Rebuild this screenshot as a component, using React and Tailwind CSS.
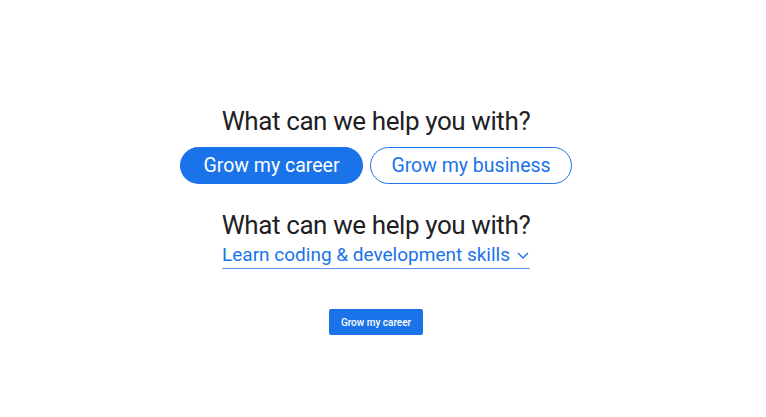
export default function App() {
  return (
    <div className="w-[766px] h-[417px] bg-white flex flex-col items-center pr-[14px]" style={{ fontFamily: "Roboto, 'Noto Sans', sans-serif" }}>
      <h1 className="mt-[104px] text-[26px] leading-[34px] tracking-[-0.4px] text-[#202124]">What can we help you with?</h1>
      <div className="mt-[9px] flex gap-[7px]">
        <button className="w-[183px] h-[37px] rounded-full bg-[#1a73e8] text-white text-[19.5px]">Grow my career</button>
        <button className="w-[202px] h-[37px] rounded-full border border-[#1a73e8] text-[#1a73e8] text-[19.5px]">Grow my business</button>
      </div>
      <h2 className="mt-[24px] text-[26px] leading-[34px] tracking-[-0.4px] text-[#202124]">What can we help you with?</h2>
      <div className="mt-0 flex items-center gap-[6px] border-b border-[#5f9cef] text-[#1a73e8] text-[19px] leading-[26px]">
        <span>Learn coding &amp; development skills</span>
        <svg width="14" height="14" viewBox="0 0 14 14" fill="none" stroke="#1a73e8" strokeWidth="1.4"><path d="M2 5l5 5 5-5" /></svg>
      </div>
      <button className="mt-[40px] w-[94px] h-[26px] rounded-[2px] bg-[#1a73e8] text-white text-[10px] font-medium">Grow my career</button>
    </div>
  );
}
